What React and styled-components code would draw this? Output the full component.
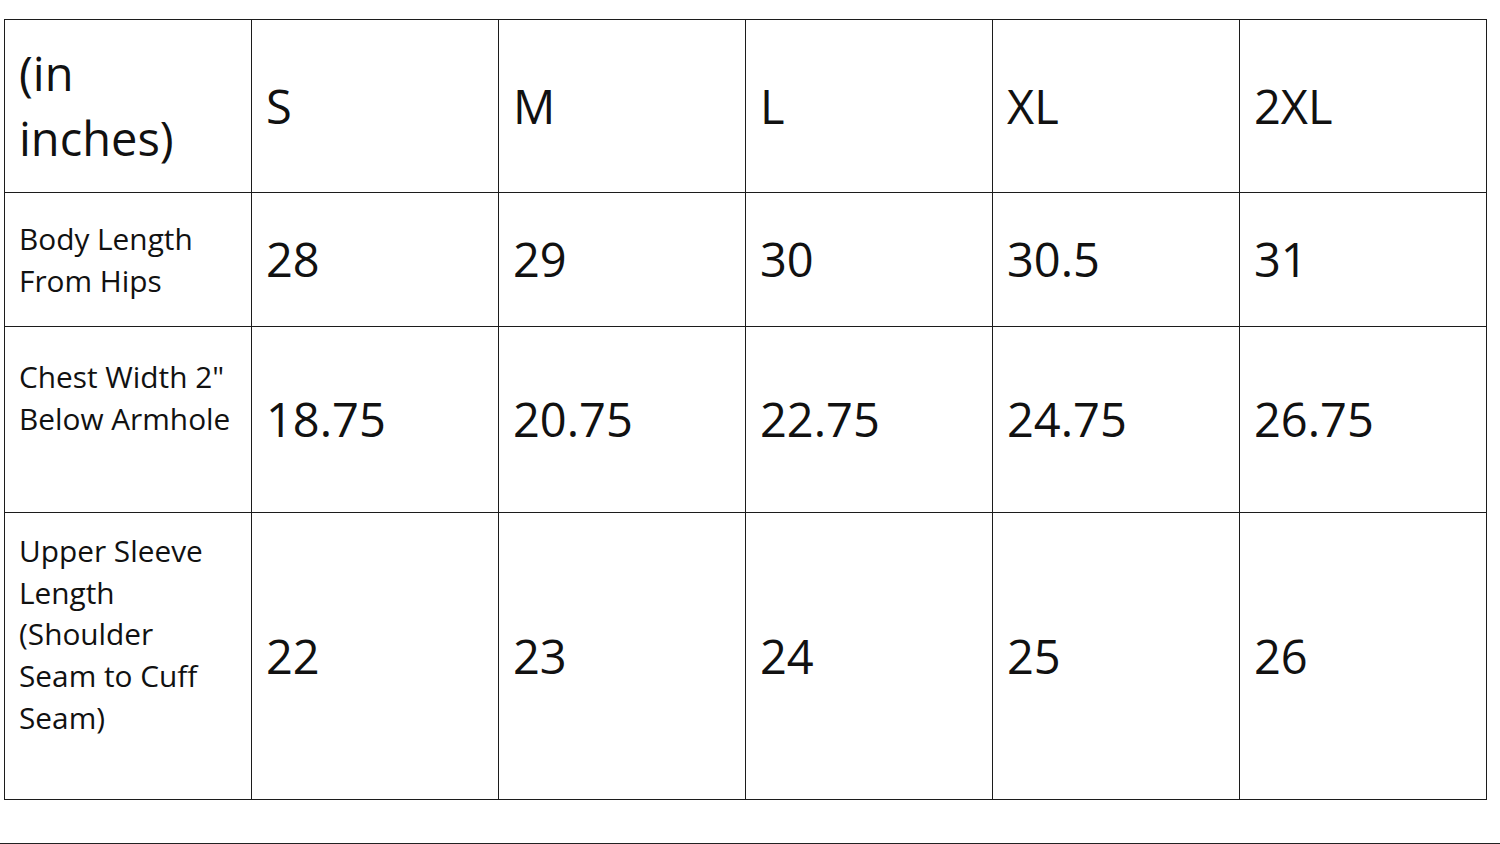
import styled, { createGlobalStyle } from "styled-components";

const GlobalStyle = createGlobalStyle`
  html, body {
    margin: 0;
    padding: 0;
    background: #fff;
  }
  body {
    font-family: "Open Sans", "Noto Sans", sans-serif;
    color: #111;
  }
`;

const Page = styled.div`
  width: 1500px;
  height: 844px;
  overflow: hidden;
  padding-top: 19px;
  box-sizing: border-box;
`;

const Table = styled.table`
  margin-left: 4px;
  width: 1483px;
  border-collapse: collapse;
  table-layout: fixed;
`;

const Row = styled.tr`
  height: ${(p) => p.$height}px;
`;

const Cell = styled.td`
  border: 1.5px solid #1c1c1c;
  padding: 0 10px 0 14px;
  vertical-align: middle;
  font-size: 47px;
  line-height: 65px;
  white-space: nowrap;
`;

const LabelCell = styled(Cell)`
  vertical-align: top;
  padding-top: ${(p) => p.$top}px;
  font-size: ${(p) => (p.$big ? 47 : 29.8)}px;
  line-height: ${(p) => (p.$big ? 65 : 41.7)}px;
  white-space: normal;
`;

const Divider = styled.div`
  margin-top: 43px;
  height: 1.5px;
  background: #222;
`;

const sizes = ["S", "M", "L", "XL", "2XL"];

const rows = [
  { label: ["Body Length", "From Hips"], top: 25, height: 134, values: ["28", "29", "30", "30.5", "31"] },
  { label: ["Chest Width 2\"", "Below Armhole"], top: 29, height: 186, values: ["18.75", "20.75", "22.75", "24.75", "26.75"] },
  {
    label: ["Upper Sleeve", "Length", "(Shoulder", "Seam to Cuff", "Seam)"],
    top: 17,
    height: 287,
    values: ["22", "23", "24", "25", "26"],
  },
];

const App = () => {
  return (
    <Page>
      <GlobalStyle />
      <Table>
        <tbody>
          <Row $height={173}>
            <LabelCell $big $top={21}>
              (in
              <br />
              inches)
            </LabelCell>
            {sizes.map((s) => (
              <Cell key={s}>{s}</Cell>
            ))}
          </Row>
          {rows.map((r) => (
            <Row key={r.label[0]} $height={r.height}>
              <LabelCell $top={r.top}>
                {r.label.map((line, i) => (
                  <span key={i}>
                    {line}
                    {i < r.label.length - 1 && <br />}
                  </span>
                ))}
              </LabelCell>
              {r.values.map((v, i) => (
                <Cell key={i}>{v}</Cell>
              ))}
            </Row>
          ))}
        </tbody>
      </Table>
      <Divider />
    </Page>
  );
};

export default App;
